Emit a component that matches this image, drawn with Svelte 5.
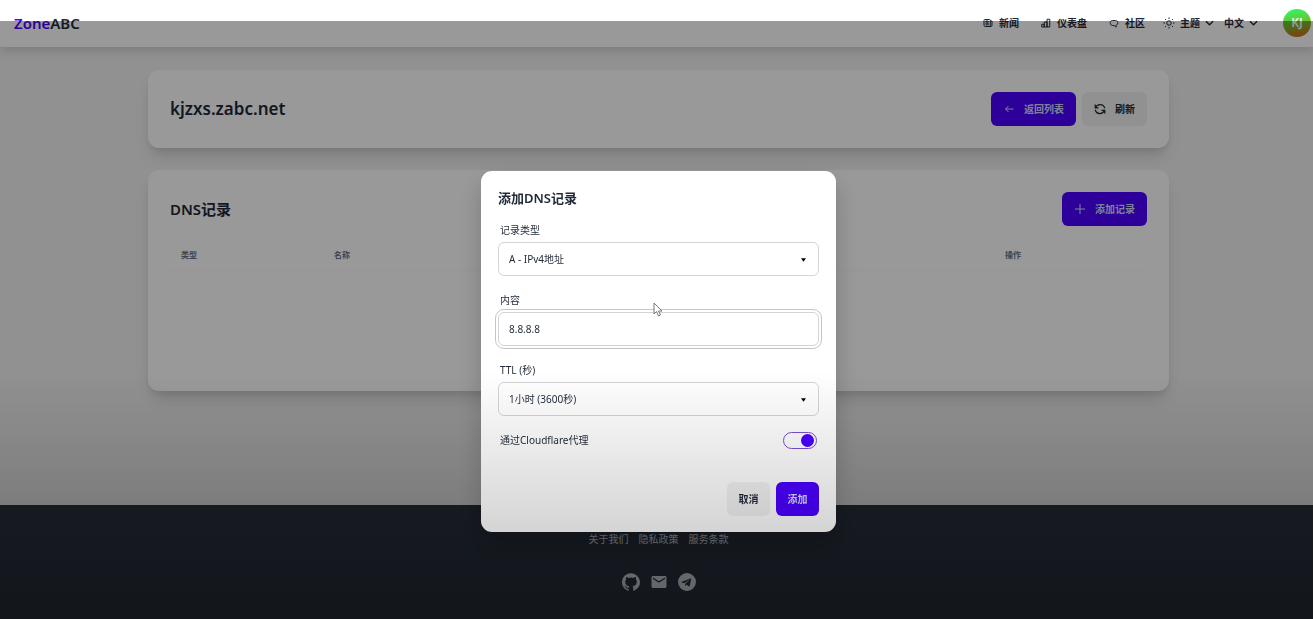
<script lang="ts">
	let recordType = $state('A');
	let content = $state('8.8.8.8');
	let ttl = $state('3600');
	let proxied = $state(true);
	let open = $state(true);

	const columns = ['类型', '名称', '操作'];
	const footerLinks = ['关于我们', '隐私政策', '服务条款'];

	function closeModal() {
		open = false;
	}
</script>

<svelte:head>
	<title>ZoneABC</title>
</svelte:head>

{#snippet chevron()}
	<svg class="chevron" viewBox="0 0 10 10"><path d="M1 3l4 4 4-4" /></svg>
{/snippet}

{#snippet arrow()}
	<svg class="arrow" viewBox="0 0 6 4" aria-hidden="true"><path d="M0 0h6L3 4z" /></svg>
{/snippet}

<div class="page">
	<header>
		<a class="logo" href="/"><span>Zone</span>ABC</a>
		<nav>
			<a href="/news">
				<svg viewBox="0 0 20 20">
					<path d="M14.5 6V4.500c0-1-.6-1.500-1.500-1.500H3.500C2.600 3 2 3.600 2 4.500v10C2 16 3 17 4.500 17h11c1.500 0 2.500-1 2.500-2.500V6h-3.500v8.500c0 1.500.5 2.500 1.500 2.500M5 10.500h6.500M5 13.500h6.500M5.500 6h5v2h-5z" />
				</svg>
				新闻
			</a>
			<a href="/dashboard">
				<svg viewBox="0 0 20 20">
					<path d="M1.500 12.500h5V18h-5zM6.500 8h5.500v10H6.500zM12 2.500h5.500V18H12z" />
				</svg>
				仪表盘
			</a>
			<a href="/community">
				<svg viewBox="0 0 20 20">
					<path d="M7 5h6c2.500 0 4.500 1.500 4.500 4v1.500c0 2-1.500 3.500-3.500 4v4L10.500 15H7c-2.500 0-4.500-1.800-4.500-4.500V9C2.500 6.500 4.500 5 7 5z" />
				</svg>
				社区
			</a>
		</nav>
		<div class="menus">
			<button class="menu">
				<svg class="sun" viewBox="0 0 24 24">
					<circle cx="12" cy="12" r="4.500" />
					<path d="M12 1v3M12 20v3M1 12h3M20 12h3M4.200 4.200l2 2M17.800 17.800l2 2M4.200 19.800l2-2M17.800 6.200l2-2" />
				</svg>
				<span>主题</span>
				{@render chevron()}
			</button>
			<button class="menu">
				<span>中文</span>
				{@render chevron()}
			</button>
		</div>
		<button class="avatar">KJ</button>
	</header>

	<main>
		<section class="card">
			<div class="card-head">
				<h1>kjzxs.zabc.net</h1>
				<div class="buttons">
					<button class="btn primary">
						<svg viewBox="0 0 12 12"><path d="M10.500 6h-8M5.500 3l-3 3 3 3" /></svg>
						返回列表
					</button>
					<button class="btn">
						<svg class="bold" viewBox="0 0 24 24">
							<path d="M2.500 3v6.500H9M21.500 21v-6.500H15M3 9.500C4.500 5.500 8 3 12 3c4.500 0 8.500 3 9.500 7.500M21 14.500C19.500 18.500 16 21 12 21c-4.500 0-8.500-3-9.500-7.500" />
						</svg>
						刷新
					</button>
				</div>
			</div>
		</section>

		<section class="card records">
			<div class="card-head">
				<h2>DNS记录</h2>
				<button class="btn primary">
					<svg viewBox="0 0 12 12"><path d="M6 1v10M1 6h10" /></svg>
					添加记录
				</button>
			</div>
			<table>
				<thead>
					<tr>
						{#each columns as column}
							<th>{column}</th>
						{/each}
					</tr>
				</thead>
				<tbody></tbody>
			</table>
		</section>
	</main>

	<footer>
		<div class="links">
			{#each footerLinks as link}
				<a href="/">{link}</a>
			{/each}
		</div>
		<div class="social">
			<a href="/" aria-label="GitHub">
				<svg viewBox="0 0 24 24">
					<path d="M12 .3a12 12 0 0 0-3.800 23.380c.6.120.83-.26.83-.57L9 21.070c-3.340.72-4.040-1.610-4.040-1.610-.55-1.390-1.340-1.760-1.340-1.760-1.080-.74.09-.73.09-.73 1.200.09 1.840 1.240 1.840 1.240 1.070 1.830 2.810 1.300 3.500 1 .1-.78.42-1.310.76-1.610-2.670-.3-5.470-1.330-5.470-5.930 0-1.310.47-2.380 1.240-3.220-.14-.3-.54-1.520.1-3.180 0 0 1.010-.32 3.300 1.230a11.500 11.500 0 0 1 6.020 0c2.280-1.550 3.290-1.230 3.290-1.230.64 1.660.24 2.880.12 3.180a4.650 4.650 0 0 1 1.230 3.220c0 4.610-2.810 5.630-5.480 5.920.42.36.81 1.100.81 2.220l-.01 3.290c0 .31.2.69.82.57A12 12 0 0 0 12 .3" />
				</svg>
			</a>
			<a href="/" aria-label="Email">
				<svg viewBox="0 0 24 24">
					<path d="M20 4H4c-1.100 0-2 .9-2 2v12c0 1.100.9 2 2 2h16c1.100 0 2-.9 2-2V6c0-1.100-.9-2-2-2zm0 4l-8 5-8-5V6l8 5 8-5v2z" />
				</svg>
			</a>
			<a href="/" aria-label="Telegram">
				<svg viewBox="0 0 24 24">
					<path d="M12 0a12 12 0 1 0 0 24 12 12 0 0 0 0-24zm5.560 8.160l-1.970 9.280c-.15.66-.54.820-1.090.51l-3-2.210-1.450 1.400c-.16.16-.3.3-.6.3l.21-3.060 5.560-5.020c.24-.21-.05-.33-.37-.13l-6.870 4.330-2.960-.92c-.64-.2-.66-.64.14-.95l11.570-4.460c.54-.2 1 .13.83.93z" />
				</svg>
			</a>
		</div>
	</footer>
</div>

{#if open}
	<div class="backdrop"></div>
	<div class="modal-wrap">
		<div class="modal" role="dialog" aria-modal="true" aria-labelledby="modal-title">
			<h3 id="modal-title">添加DNS记录</h3>

			<label for="type">记录类型</label>
			<div class="select">
				<select id="type" bind:value={recordType}>
					<option value="A">A - IPv4地址</option>
				</select>
				{@render arrow()}
			</div>

			<label for="content">内容</label>
			<input id="content" class="text focused" type="text" bind:value={content} />

			<label for="ttl">TTL (秒)</label>
			<div class="select">
				<select id="ttl" bind:value={ttl}>
					<option value="3600">1小时 (3600秒)</option>
				</select>
				{@render arrow()}
			</div>

			<div class="proxy">
				<label for="proxied">通过Cloudflare代理</label>
				<input id="proxied" class="toggle" type="checkbox" bind:checked={proxied} />
			</div>

			<div class="actions">
				<button class="btn" onclick={closeModal}>取消</button>
				<button class="btn primary" onclick={closeModal}>添加</button>
			</div>
		</div>
	</div>
{/if}

<div class="shade"></div>
<svg class="pointer" viewBox="0 0 10 15" aria-hidden="true">
	<path d="M1 1v11l2.500-2.500L5.500 14l2-1-2-4H9z" />
</svg>

<style>
	:global(body) {
		margin: 0;
		background: #f2f2f2;
		color: #1f2937;
		font-family: 'Noto Sans', 'Noto Sans CJK SC', sans-serif;
		font-size: 10px;
		line-height: 14px;
	}
	* { box-sizing: border-box; }
	a { color: inherit; text-decoration: none; }
	button, input, select { font: inherit; color: inherit; }
	h1, h2, h3 { margin: 0; font-weight: 600; }
	svg { display: block; flex: none; }

	.page {
		min-height: 100vh;
		display: flex;
		flex-direction: column;
	}

	header {
		display: flex;
		align-items: center;
		height: 47px;
		padding: 0 2px 2px 14px;
		background: #fff;
		box-shadow: 0 4px 10px rgba(0, 0, 0, 0.15);
		font-weight: 600;
	}
	.logo {
		margin-right: auto;
		font-size: 15px;
	}
	.logo span { color: #4a00ff; }
	nav {
		display: flex;
		gap: 22px;
		margin-right: 18px;
	}
	nav a, .menu {
		display: flex;
		align-items: center;
		gap: 6px;
	}
	header svg {
		width: 10px;
		height: 10px;
		fill: none;
		stroke: currentColor;
		stroke-width: 2;
	}
	header .sun { width: 12px; height: 12px; }
	header .chevron { width: 9px; stroke-width: 1.500; }
	.menus { display: flex; gap: 10px; margin-right: 25px; }
	.menu {
		gap: 5px;
		padding: 0;
		border: 0;
		background: none;
		cursor: pointer;
	}
	.avatar {
		width: 28px;
		height: 28px;
		padding: 0;
		border: 0;
		border-radius: 50%;
		background: linear-gradient(170deg, #35f25c 10%, #6fbf2c 50%, #d66a1c 95%);
		color: #fff;
		font-size: 12px;
	}

	main {
		flex: 1;
		display: flex;
		flex-direction: column;
		align-items: center;
		gap: 22px;
		padding: 23px 0 22px 4px;
	}
	.card {
		width: 78%;
		padding: 22px;
		border-radius: 11px;
		background: #fff;
		box-shadow: 0 12px 18px -4px rgba(0, 0, 0, 0.12), 0 5px 8px -3px rgba(0, 0, 0, 0.12);
	}
	.records { min-height: 221px; }
	.card-head {
		display: flex;
		align-items: center;
		justify-content: space-between;
	}
	h1 { font-size: 17px; line-height: 24px; }
	h2 { font-size: 15px; line-height: 20px; }
	.buttons { display: flex; gap: 6px; }
	.btn {
		display: flex;
		align-items: center;
		justify-content: center;
		gap: 9px;
		height: 34px;
		padding: 0 12px;
		border: 0;
		border-radius: 6px;
		background: #f2f2f2;
		font-weight: 600;
		cursor: pointer;
	}
	.btn svg {
		width: 12px;
		height: 12px;
		fill: none;
		stroke: currentColor;
		stroke-width: 1;
	}
	.btn svg.bold { stroke-width: 2.500; }
	.btn.primary { background: #4a00ff; color: #d1dbff; }

	table {
		width: 100%;
		margin-top: 15px;
		border-collapse: collapse;
		table-layout: fixed;
	}
	th {
		height: 29px;
		padding: 0 11px;
		border-bottom: 1px solid #f8f8f8;
		color: #6b7280;
		font-size: 8px;
		text-align: left;
	}
	th:first-child, th:last-child { width: 153px; }

	footer {
		display: flex;
		flex-direction: column;
		align-items: center;
		gap: 27px;
		padding: 27px 0 28px 4px;
		background: #2b3440;
		color: #d7dde4;
	}
	.links, .social { display: flex; gap: 10px; }
	.social svg { width: 18px; height: 18px; fill: currentColor; }

	/* the dimmed area starts below the top strip of the header */
	.backdrop {
		position: fixed;
		inset: 21px 0 0;
		background: rgba(0, 0, 0, 0.4);
	}
	.modal-wrap {
		position: fixed;
		inset: 0;
		display: flex;
		align-items: center;
		justify-content: center;
		padding: 84px 0 0 4px;
	}
	.modal {
		width: 355px;
		padding: 17px 17px 16px;
		border-radius: 11px;
		background: #fff;
		box-shadow: 0 12px 26px rgba(0, 0, 0, 0.2);
	}
	h3 {
		margin-bottom: 10px;
		font-size: 13px;
		line-height: 20px;
	}
	.modal label {
		display: block;
		padding: 0 2px;
		line-height: 24px;
	}
	.select { position: relative; }
	select, .text {
		display: block;
		width: 100%;
		height: 34px;
		margin-bottom: 12px;
		padding: 0 10px;
		border: 1px solid #d2d4d7;
		border-radius: 6px;
		appearance: none;
		background: #fff;
	}
	.text.focused {
		outline: 1px solid #c3c5c9;
		outline-offset: 2px;
	}
	.arrow {
		position: absolute;
		top: 16px;
		right: 13px;
		width: 5px;
		height: 4px;
		pointer-events: none;
	}
	.proxy {
		display: flex;
		align-items: center;
		justify-content: space-between;
		padding-right: 2px;
	}
	.toggle {
		display: flex;
		align-items: center;
		width: 34px;
		height: 17px;
		margin: 0;
		padding: 0 2px;
		border: 1px solid #7a4fd0;
		border-radius: 9px;
		appearance: none;
		background: #fff;
	}
	.toggle::before {
		content: '';
		width: 13px;
		height: 13px;
		border-radius: 50%;
		background: #4a00ff;
	}
	.toggle:checked { justify-content: flex-end; }
	.actions {
		display: flex;
		justify-content: flex-end;
		gap: 6px;
		margin-top: 30px;
	}
	.actions .btn { padding: 0; width: 43px; }

	.shade {
		position: fixed;
		inset: 60% 0 0;
		background: linear-gradient(rgba(0, 0, 0, 0), rgba(0, 0, 0, 0.26));
		pointer-events: none;
	}
	.pointer {
		position: fixed;
		top: 302px;
		left: 653px;
		width: 10px;
		height: 15px;
		fill: #fff;
		stroke: #777;
		stroke-width: 1;
		pointer-events: none;
	}
</style>
